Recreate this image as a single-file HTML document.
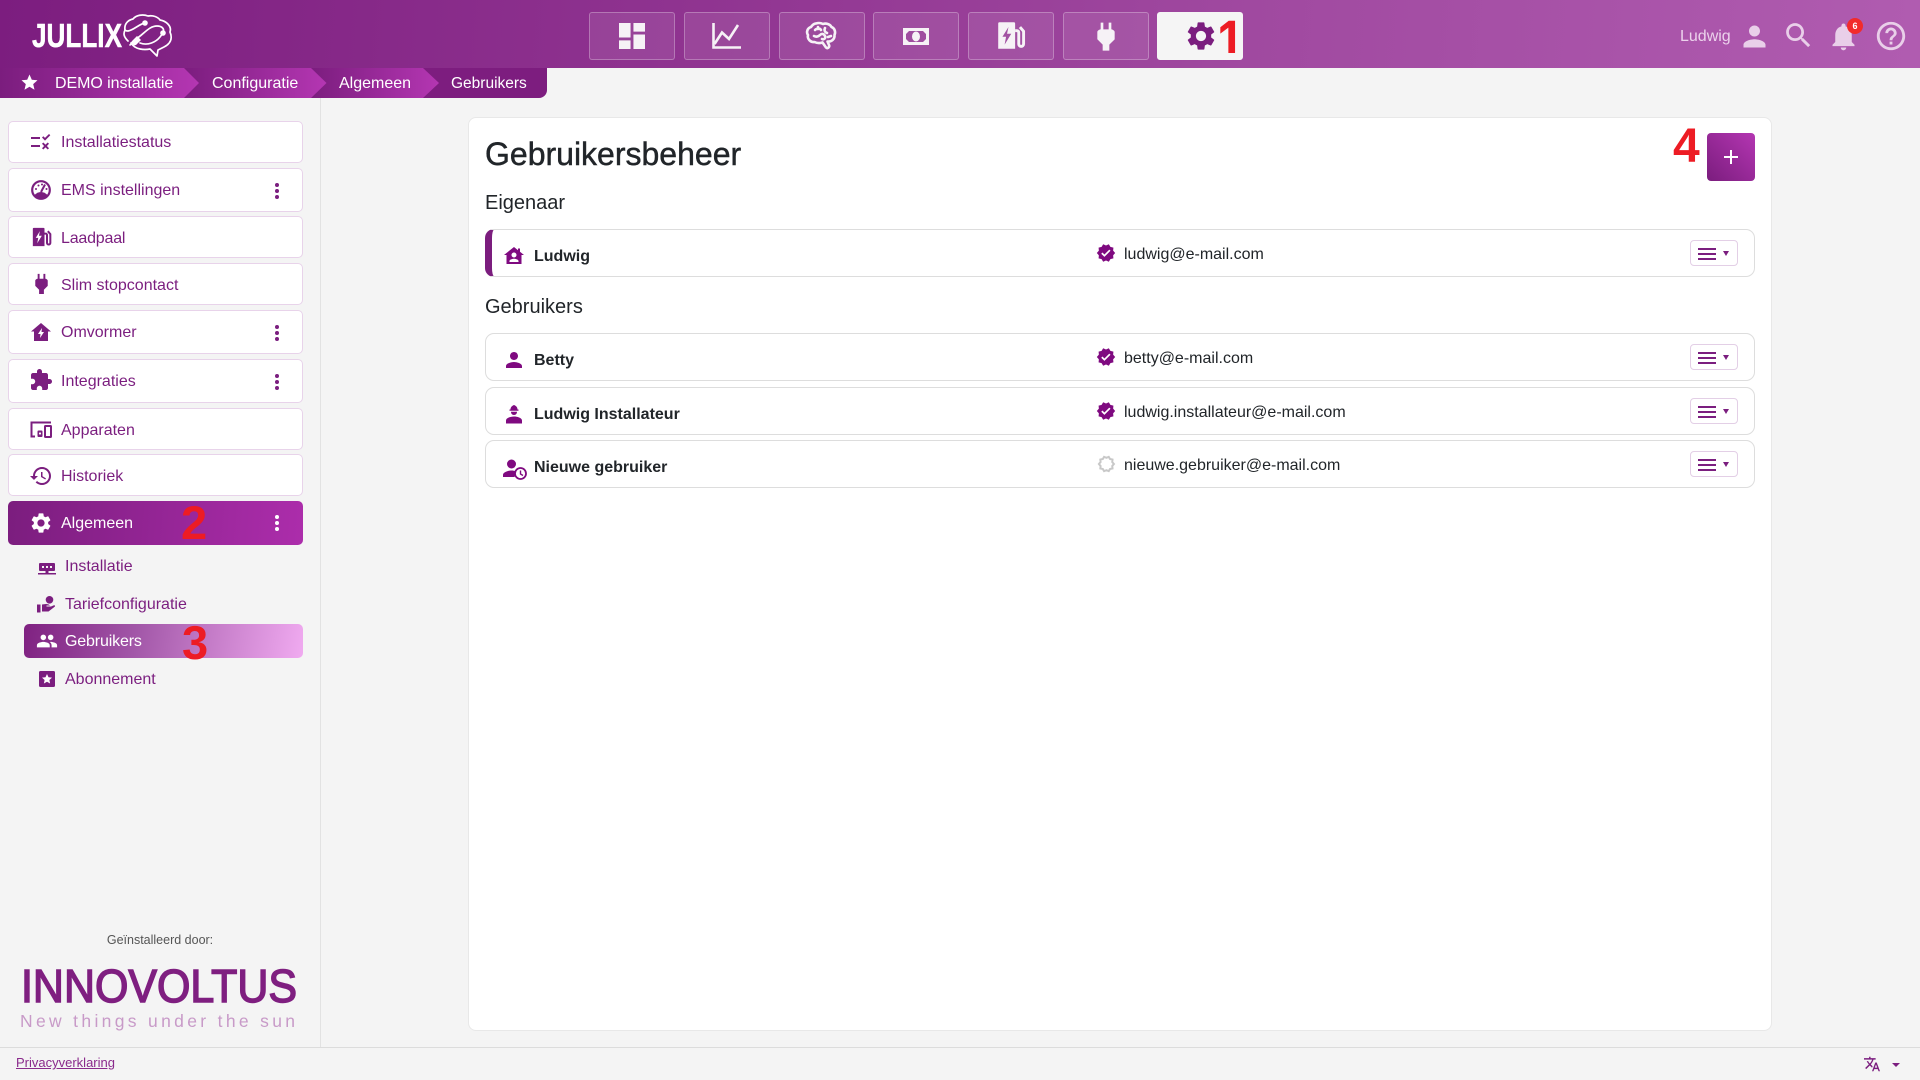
<!DOCTYPE html>
<html lang="nl">
<head>
<meta charset="utf-8">
<title>Gebruikersbeheer</title>
<style>
html,body{margin:0;padding:0;width:1920px;height:1080px;overflow:hidden;background:#f4f4f4;font-family:"Liberation Sans",sans-serif}
#root{position:relative;width:1920px;height:1080px;overflow:hidden}
.a,.t,.i,.b{position:absolute}
.t{white-space:nowrap;line-height:20px}
.i{display:block;overflow:visible}
.hdr{left:0;top:0;width:1920px;height:68px;background:linear-gradient(95deg,#7c1d7f 0%,#8f3390 35%,#a049a0 65%,#b05cb0 100%)}
.nb{position:absolute;top:12px;width:84px;height:46px;border:1px solid rgba(255,255,255,.28);background:rgba(255,255,255,.09);border-radius:3px}
.bc{color:#fff;font-size:16px;top:74px}
.side{left:320px;top:98px;width:1px;height:949px;background:#e2e2e2}
.m{position:absolute;left:8px;width:293px;background:#fff;border:1px solid #e8d3ea;border-radius:5px}
.mt{color:#7b1e7f;font-size:16px;left:61px}
.st{color:#7b1e7f;font-size:16px;left:65px}
.card{left:468px;top:117px;width:1302px;height:912px;background:#fff;border:1px solid #e8e8e8;border-radius:8px}
.row{position:absolute;left:485px;width:1268px;height:46px;background:#fff;border:1px solid #ddd;border-radius:9px}
.nm{font-weight:bold;font-size:16px;color:#212529;left:534px}
.em{font-size:16px;color:#212529;left:1124px}
.h{font-size:20px;color:#212529;left:485px}
.mb{position:absolute;left:1690px;width:46px;height:24px;border:1px solid #e3cfe6;border-radius:4px;background:#fff}
.mb i{position:absolute;left:7px;width:18px;height:2px;background:#7b1e7f}
.mb b{position:absolute;left:32px;top:10px;width:0;height:0;border-left:3.5px solid transparent;border-right:3.5px solid transparent;border-top:5px solid #7b1e7f}
.red{color:#ed1c24;font-weight:bold;line-height:1}
</style>
</head>
<body>
<div id="root">
<svg width="0" height="0" style="position:absolute">
<defs>
<symbol id="gear" viewBox="0 0 24 24"><path d="M19.14 12.94c.04-.3.06-.61.06-.94 0-.32-.02-.64-.07-.94l2.03-1.58c.18-.14.23-.41.12-.61l-1.92-3.32c-.12-.22-.37-.29-.59-.22l-2.39.96c-.5-.38-1.03-.7-1.62-.94l-.36-2.54c-.04-.24-.24-.41-.48-.41h-3.84c-.24 0-.43.17-.47.41l-.36 2.54c-.59.24-1.13.57-1.62.94l-2.39-.96c-.22-.08-.47 0-.59.22L2.74 8.87c-.12.21-.08.47.12.61l2.03 1.58c-.05.3-.09.63-.09.94s.02.64.07.94l-2.03 1.58c-.18.14-.23.41-.12.61l1.92 3.32c.12.22.37.29.59.22l2.39-.96c.5.38 1.03.7 1.62.94l.36 2.54c.05.24.24.41.48.41h3.84c.24 0 .44-.17.47-.41l.36-2.54c.59-.24 1.13-.56 1.62-.94l2.39.96c.22.08.47 0 .59-.22l1.92-3.32c.12-.22.07-.47-.12-.61l-2.01-1.58zM12 15.6c-1.98 0-3.6-1.62-3.6-3.6s1.62-3.6 3.6-3.6 3.6 1.62 3.6 3.6-1.62 3.6-3.6 3.6z"/></symbol>
<symbol id="ev" viewBox="0 0 24 24"><path fill-rule="evenodd" d="M2 1h12a1 1 0 0 1 1 1v21H1V2a1 1 0 0 1 1-1zM9.5 5 4.5 13h3l-1.2 6.5L11.8 10.5H8.3z"/><path d="M15 8h1.5a1.5 1.5 0 0 1 1.5 1.5v9.5a2 2 0 0 0 4 0V8.5L19 5" fill="none" stroke="currentColor" stroke-width="2.4"/></symbol>
<symbol id="plug" viewBox="0 0 24 24"><path d="M16.01 7 16 2h-2v5h-4V2H8v5h-.01C7 6.99 5.5 7.99 5.5 8.99v5.49L9.5 18.5V23h5v-4.5l4-4.01v-5.5c0-1-1.5-2-2.49-1.99z"/></symbol>
<symbol id="person" viewBox="0 0 24 24"><path d="M12 12c2.21 0 4-1.79 4-4s-1.79-4-4-4-4 1.79-4 4 1.79 4 4 4zm0 2c-2.67 0-8 1.34-8 4v2h16v-2c0-2.66-5.33-4-8-4z"/></symbol>
<symbol id="ver" viewBox="0 0 24 24"><path d="M23 12l-2.44-2.79.34-3.69-3.61-.82-1.89-3.2L12 2.96 8.6 1.5 6.71 4.69 3.1 5.5l.34 3.7L1 12l2.44 2.79-.34 3.7 3.61.82L8.6 22.5l3.4-1.47 3.4 1.46 1.89-3.19 3.61-.82-.34-3.69L23 12zm-12.91 4.72l-3.8-3.81 1.48-1.48 2.32 2.33 5.85-5.87 1.48 1.48-7.33 7.35z"/></symbol>
<symbol id="keb" viewBox="0 0 4 16"><circle cx="2" cy="2" r="2"/><circle cx="2" cy="8" r="2"/><circle cx="2" cy="14" r="2"/></symbol>
<linearGradient id="g1" gradientUnits="userSpaceOnUse" x1="0" y1="0" x2="199" y2="0"><stop offset="0" stop-color="#7b1d7e"/><stop offset="1" stop-color="#b436b2"/></linearGradient>
<linearGradient id="g2" gradientUnits="userSpaceOnUse" x1="184" y1="0" x2="326" y2="0"><stop offset="0" stop-color="#7b1d7e"/><stop offset="1" stop-color="#b436b2"/></linearGradient>
<linearGradient id="g3" gradientUnits="userSpaceOnUse" x1="311" y1="0" x2="439" y2="0"><stop offset="0" stop-color="#7b1d7e"/><stop offset="1" stop-color="#b436b2"/></linearGradient>
</defs>
</svg>

<!-- header -->
<div class="a hdr"></div>
<svg class="i" style="left:0;top:0" width="190" height="68" viewBox="0 0 190 68">
<text x="32" y="47" font-family="Liberation Sans" font-weight="bold" font-size="33" fill="#fff" stroke="#fff" stroke-width=".5" textLength="90" lengthAdjust="spacingAndGlyphs">JULLIX</text>
<g fill="none" stroke="#fff" stroke-width="1.7" stroke-linecap="round" stroke-linejoin="round">
<path d="M128 41C124 37 123 34 125 30C124 24 128 20 133 19C136 15 143 14 148 16C153 15 158 17 160 20C166 21 172 26 170 32C173 39 170 44 164 47L158 50L157 56L150 49C145 50 135 50 131 43"/>
<path d="M145 23C139 24 134 30 128 31C126 31 125 30 125 30"/>
<path d="M136 39C144 34 149 26 157 26C162 26 165 29 163 33"/>
<path d="M140 43C148 46 156 42 160 37L163 33"/>
</g>
<g fill="#fff"><circle cx="145" cy="23" r="2.8"/><circle cx="163" cy="33" r="2.8"/><path d="M132 41l5-5 4 4-5 5-2 .5-1.5-1.5-2.5 2-1-1 2-2.500z"/></g>
</svg>

<!-- breadcrumb -->
<svg class="i" style="left:0;top:68px" width="560" height="30" viewBox="0 68 560 30">
<path d="M0 68H547V90a8 8 0 0 1-8 8H0z" fill="#7d1d7f"/>
<path d="M311 68H423L439 83 423 98H311z" fill="url(#g3)"/>
<path d="M184 68H311L326.5 83 311 98H184z" fill="url(#g2)"/>
<path d="M0 68H184L199 83 184 98H0z" fill="url(#g1)"/>
<path d="M29.5 74.5l2.3 5.3 5.7.5-4.3 3.8 1.3 5.6-5-3-5 3 1.3-5.6-4.3-3.8 5.700-.5z" fill="#fff"/>
</svg>
<div class="t bc" style="left:55px;letter-spacing:-.06px">DEMO installatie</div>
<div class="t bc" style="left:212px">Configuratie</div>
<div class="t bc" style="left:339px">Algemeen</div>
<div class="t bc" style="left:451px;font-size:15.5px">Gebruikers</div>

<!-- nav buttons -->
<div class="nb" style="left:589px"></div>
<div class="nb" style="left:684px"></div>
<div class="nb" style="left:779px"></div>
<div class="nb" style="left:873px"></div>
<div class="nb" style="left:968px"></div>
<div class="nb" style="left:1063px"></div>
<div class="nb" style="left:1157px;background:#f5f5f5;border-color:#f5f5f5"></div>

<svg class="i" style="left:619px;top:23px" width="26" height="26" viewBox="3 3 18 18" preserveAspectRatio="none"><path fill="#f6f2f6" d="M3 13h8V3H3v10zm0 8h8v-6H3v6zm10 0h8V11h-8v10zm0-18v6h8V3h-8z"/></svg>
<svg class="i" style="left:712px;top:23px" width="29" height="26" viewBox="0 0 29 26" fill="none" stroke="#f6f2f6" stroke-width="2.6"><path d="M1.500 0V24.500H29"/><path d="M2.500 21 10 9.500 17 16 26 2"/></svg>
<svg class="i" style="left:806px;top:22px" width="31" height="28" viewBox="0 0 31 28" fill="none" stroke="#f6f2f6" stroke-width="2.6" stroke-linecap="round" stroke-linejoin="round"><path d="M10 1.500c3-1 5-.5 7 .5 3-1 7 0 8.500 3 3 1 4.500 5 3 8 .5 4-3 7-7 6.500l1.500 3.500c1 2-1.500 4-3 2.500l-3.500-5c-3 1-6 .5-8-.5-4 .5-7.500-3-6.500-7-2-3-.5-7 3-8 1-1.500 2.500-3 4.500-3.500z"/><path d="M9 8c2-2 5-2 6 0M19 6c-1 2-.5 4 2 5M8 14c2 1 4 1 6-1 2-2 4-1 5 1s-1 4-3 3M22 15l3-1M12 5v2"/></svg>
<svg class="i" style="left:903px;top:28px" width="26" height="17" viewBox="0 0 26 17"><path fill="#f6f2f6" fill-rule="evenodd" d="M0 0H26V17H0zM3 3V14H23V3z"/><ellipse cx="13" cy="8.500" rx="4" ry="5" fill="#f6f2f6"/><path fill="#f6f2f6" d="M3 3h3L3 6zM23 3h-3l3 3zM3 14h3L3 11zM23 14h-3l3-3z"/></svg>
<svg class="i" style="left:997px;top:21px;color:#f6f2f6" width="29" height="29" fill="#f6f2f6"><use href="#ev"/></svg>
<svg class="i" style="left:1090px;top:20px" width="32" height="32" fill="#f6f2f6"><use href="#plug"/></svg>
<svg class="i" style="left:1184px;top:19px" width="34" height="34" fill="#7b1e7f"><use href="#gear"/></svg>
<div class="a red" style="left:1217px;top:13px;font-size:58px;transform:scaleX(.84);transform-origin:left top;clip-path:inset(0 0 18px 0)">1</div>

<!-- right header -->
<div class="t" style="left:1680px;top:27px;font-size:16px;color:#ecd2ec">Ludwig</div>
<svg class="i" style="left:1738px;top:20px" width="33" height="33" fill="#e9cfe9"><use href="#person"/></svg>
<svg class="i" style="left:1782px;top:19px" width="33" height="33" viewBox="0 0 24 24"><path fill="#e9cfe9" d="M15.5 14h-.79l-.28-.27C15.41 12.59 16 11.11 16 9.5 16 5.91 13.09 3 9.5 3S3 5.91 3 9.5 5.91 16 9.5 16c1.61 0 3.09-.59 4.23-1.57l.27.28v.79l5 4.99L20.49 19l-4.99-5zm-6 0C7.01 14 5 11.99 5 9.5S7.01 5 9.5 5 14 7.01 14 9.5 11.99 14 9.5 14z"/></svg>
<svg class="i" style="left:1827px;top:20px" width="33" height="33" viewBox="0 0 24 24"><path fill="#e9cfe9" d="M12 22c1.1 0 2-.9 2-2h-4c0 1.1.89 2 2 2zm6-6v-5c0-3.07-1.64-5.64-4.5-6.32V4c0-.83-.67-1.5-1.5-1.5s-1.5.67-1.5 1.5v.68C7.63 5.36 6 7.92 6 11v5l-2 2v1h16v-1l-2-2z"/></svg>
<div class="a" style="left:1847px;top:18px;width:16px;height:16px;border-radius:50%;background:#f22b2b;color:#fff;font-size:9px;font-weight:bold;line-height:16px;text-align:center">6</div>
<svg class="i" style="left:1874px;top:19px" width="34" height="34" viewBox="0 0 24 24"><path fill="#e9cfe9" d="M11 18h2v-2h-2v2zm1-16C6.48 2 2 6.48 2 12s4.48 10 10 10 10-4.48 10-10S17.52 2 12 2zm0 18c-4.41 0-8-3.59-8-8s3.59-8 8-8 8 3.59 8 8-3.59 8-8 8zm0-14c-2.21 0-4 1.79-4 4h2c0-1.1.9-2 2-2s2 .9 2 2c0 2-3 1.75-3 5h2c0-2.25 3-2.5 3-5 0-2.21-1.79-4-4-4z"/></svg>

<!-- sidebar -->
<div class="a side"></div>
<div class="m" style="top:121px;height:40px"></div>
<div class="m" style="top:168px;height:42px"></div>
<div class="m" style="top:216px;height:40px"></div>
<div class="m" style="top:263px;height:40px"></div>
<div class="m" style="top:310px;height:42px"></div>
<div class="m" style="top:359px;height:42px"></div>
<div class="m" style="top:408px;height:40px"></div>
<div class="m" style="top:454px;height:40px"></div>
<div class="a" style="left:8px;top:501px;width:295px;height:44px;border-radius:5px;background:linear-gradient(95deg,#7b1d7e,#ac2dab)"></div>
<div class="a" style="left:24px;top:624px;width:279px;height:34px;border-radius:5px;background:linear-gradient(100deg,#7f2181 0%,#a257a8 40%,#f0aaf0 100%)"></div>

<div class="t mt" style="top:133px">Installatiestatus</div>
<div class="t mt" style="top:181px">EMS instellingen</div>
<div class="t mt" style="top:229px;letter-spacing:-.2px">Laadpaal</div>
<div class="t mt" style="top:276px">Slim stopcontact</div>
<div class="t mt" style="top:323px">Omvormer</div>
<div class="t mt" style="top:372px">Integraties</div>
<div class="t mt" style="top:421px">Apparaten</div>
<div class="t mt" style="top:467px">Historiek</div>
<div class="t mt" style="top:514px;color:#fff">Algemeen</div>
<div class="t st" style="top:557px">Installatie</div>
<div class="t st" style="top:595px">Tariefconfiguratie</div>
<div class="t st" style="top:632px;color:#fff;letter-spacing:-.15px">Gebruikers</div>
<div class="t st" style="top:670px">Abonnement</div>

<svg class="i" style="left:31px;top:134px" width="20" height="16" viewBox="0 0 20 16" fill="#7b1e7f"><rect x="0" y="3" width="9" height="2"/><rect x="0" y="11" width="9" height="2"/><path d="M11 3.500l1.300-1.300 1.700 1.700L18 0l1.300 1.300-5.300 5.300zM12.300 8.500l2.200 2.100 2.200-2.100L18 9.800l-2.100 2.200 2.100 2.200-1.300 1.300-2.200-2.100-2.200 2.100-1.300-1.300 2.100-2.200-2.100-2.200z"/></svg>
<svg class="i" style="left:31px;top:180px" width="20" height="20" viewBox="0 0 20 20"><circle cx="10" cy="10" r="8.800" fill="none" stroke="#7b1e7f" stroke-width="2.2"/><path d="M3.500 15c2-2 4-3 6.500-3s4.500 1 6.500 3l-2 3h-9z" fill="#7b1e7f"/><path d="M10 12l4-7.500" stroke="#7b1e7f" stroke-width="2"/><g fill="#7b1e7f"><circle cx="5" cy="9" r="1"/><circle cx="7.500" cy="5.500" r="1"/><circle cx="11" cy="4.500" r="1"/><circle cx="15.500" cy="9" r="1"/></g></svg>
<svg class="i" style="left:32px;top:227px;color:#7b1e7f" width="20" height="20" fill="#7b1e7f"><use href="#ev"/></svg>
<svg class="i" style="left:29.5px;top:272px" width="23" height="23" fill="#7b1e7f"><use href="#plug"/></svg>
<svg class="i" style="left:31px;top:323px" width="20" height="18" viewBox="0 0 20 18"><path fill="#7b1e7f" fill-rule="evenodd" d="M10 0 20 8.500H17V18H3V8.500H0zM11 5 7 11h2.500L9 15l4-6h-2.500z"/></svg>
<svg class="i" style="left:29px;top:368px" width="24" height="24" viewBox="0 0 24 24"><path fill="#7b1e7f" d="M20.5 11H19V7c0-1.1-.9-2-2-2h-4V3.500C13 2.120 11.880 1 10.500 1S8 2.120 8 3.500V5H4c-1.1 0-1.990.9-1.990 2v3.800H3.500c1.490 0 2.700 1.210 2.700 2.700s-1.210 2.700-2.700 2.700H2V20c0 1.100.9 2 2 2h3.800v-1.500c0-1.490 1.210-2.700 2.700-2.700 1.490 0 2.700 1.210 2.700 2.700V22H17c1.100 0 2-.9 2-2v-4h1.500c1.380 0 2.500-1.120 2.500-2.500S21.880 11 20.500 11z"/></svg>
<svg class="i" style="left:30px;top:421px" width="22" height="17" viewBox="0 0 22 17" fill="none" stroke="#7b1e7f" stroke-width="2"><path d="M5 15.500H1.500V1.500H21"/><rect x="15" y="5" width="6" height="11" rx=".5"/><rect x="7.500" y="9.500" width="5" height="6.500" rx="1" fill="#7b1e7f" stroke="none"/><circle cx="10" cy="12.500" r="1.100" fill="#fff" stroke="none"/></svg>
<svg class="i" style="left:29px;top:464px" width="24" height="24" viewBox="0 0 24 24"><path fill="#7b1e7f" d="M13 3c-4.970 0-9 4.030-9 9H1l3.890 3.890.07.14L9 12H6c0-3.870 3.130-7 7-7s7 3.130 7 7-3.130 7-7 7c-1.930 0-3.680-.79-4.940-2.060l-1.420 1.420C8.270 19.990 10.510 21 13 21c4.970 0 9-4.030 9-9s-4.030-9-9-9zm-1 5v5l4.280 2.540.72-1.210-3.500-2.080V8H12z"/></svg>
<svg class="i" style="left:29px;top:511px" width="24" height="24" fill="#fff"><use href="#gear"/></svg>

<svg class="i" style="left:38px;top:563px" width="18" height="13" viewBox="0 0 18 13" fill="#7b1e7f"><path fill-rule="evenodd" d="M2 0H16a1 1 0 0 1 1 1V7a1 1 0 0 1-1 1H2A1 1 0 0 1 1 7V1A1 1 0 0 1 2 0zM4 3V5H6V3zM8 3V5H10V3zM12 3V5H14V3z"/><rect x="7.500" y="8" width="3" height="2"/><rect x="0" y="10" width="18" height="1.500"/></svg>
<svg class="i" style="left:37px;top:596px" width="18" height="17" viewBox="0 0 18 17" fill="#7b1e7f"><circle cx="12.500" cy="3.800" r="3.800"/><rect x="0" y="8.500" width="3.500" height="8"/><path d="M5 8.500 9 8c2 0 3 .5 4 1.500H9.500v1H14l3.500-1.500.5 1.500-6.500 5H5z"/></svg>
<svg class="i" style="left:36px;top:630px" width="22" height="22" viewBox="0 0 24 24"><path fill="#fff" d="M16 11c1.660 0 2.990-1.340 2.990-3S17.660 5 16 5c-1.660 0-3 1.340-3 3s1.340 3 3 3zm-8 0c1.660 0 2.990-1.340 2.990-3S9.660 5 8 5C6.340 5 5 6.340 5 8s1.340 3 3 3zm0 2c-2.330 0-7 1.170-7 3.500V19h14v-2.500c0-2.330-4.670-3.500-7-3.500zm8 0c-.29 0-.62.02-.97.05 1.160.84 1.970 1.970 1.970 3.450V19h6v-2.500c0-2.330-4.670-3.500-7-3.500z"/></svg>
<svg class="i" style="left:39px;top:671px" width="16" height="16" viewBox="0 0 16 16"><rect width="16" height="16" rx="1.500" fill="#7b1e7f"/><path fill="#fff" d="M8 3l1.500 3.200 3.500.4-2.600 2.400.7 3.500L8 10.800 4.900 12.500l.7-3.500L3 6.600l3.500-.4z"/></svg>

<svg class="i" style="left:275px;top:183px" width="4" height="16" fill="#7b1e7f"><use href="#keb"/></svg>
<svg class="i" style="left:275px;top:325px" width="4" height="16" fill="#7b1e7f"><use href="#keb"/></svg>
<svg class="i" style="left:275px;top:374px" width="4" height="16" fill="#7b1e7f"><use href="#keb"/></svg>
<svg class="i" style="left:275px;top:515px" width="4" height="16" fill="#fff"><use href="#keb"/></svg>

<div class="a red" style="left:181px;top:499px;font-size:47px">2</div>
<div class="a red" style="left:182px;top:619px;font-size:47px">3</div>

<div class="t" style="left:60px;width:200px;text-align:center;top:930px;font-size:12.5px;color:#555">Geïnstalleerd door:</div>
<svg class="i" style="left:0;top:950px" width="320" height="90" viewBox="0 950 320 90">
<text x="21" y="1002" font-family="Liberation Sans" font-size="46" fill="#7f1f80" stroke="#7f1f80" stroke-width="1.5" textLength="276" lengthAdjust="spacingAndGlyphs">INNOVOLTUS</text>
<text x="20" y="1027" font-family="Liberation Sans" font-size="17.5" fill="#c89ac8" textLength="275" lengthAdjust="spacing">New things under the sun</text>
</svg>

<!-- footer -->
<div class="a" style="left:0;top:1047px;width:1920px;height:1px;background:#dcdcdc"></div>
<div class="t" style="left:16px;top:1053px;font-size:13px;color:#8a2a8c;text-decoration:underline">Privacyverklaring</div>
<svg class="i" style="left:1864px;top:1056px" width="16" height="16" viewBox="1 2 22 20"><path fill="#7b1e7f" d="M12.870 15.070l-2.540-2.510.03-.03c1.740-1.940 2.980-4.170 3.710-6.530H17V4h-7V2H8v2H1v1.990h11.170C11.500 7.920 10.440 9.750 9 11.350 8.070 10.320 7.300 9.190 6.690 8h-2c.73 1.630 1.730 3.170 2.980 4.560l-5.090 5.020L4 19l5-5 3.110 3.110.76-2.040zM18.500 10h-2L12 22h2l1.120-3h4.750L21 22h2l-4.500-12zm-2.620 7l1.620-4.330L19.120 17h-3.240z"/></svg>
<div class="a" style="left:1892px;top:1063px;width:0;height:0;border-left:4px solid transparent;border-right:4px solid transparent;border-top:4px solid #7b1e7f"></div>

<!-- card -->
<div class="a card"></div>
<div class="t" style="left:485px;top:134px;line-height:40px;font-size:32px;color:#212529;-webkit-text-stroke:.45px #212529">Gebruikersbeheer</div>
<div class="t h" style="top:193px">Eigenaar</div>
<div class="t h" style="top:297px">Gebruikers</div>
<div class="a red" style="left:1673px;top:123px;font-size:48px">4</div>
<div class="a" style="left:1707px;top:133px;width:48px;height:48px;border-radius:4px;background:linear-gradient(to top right,#7b1d7e,#b436b2)"></div>
<div class="a" style="left:1724px;top:156px;width:14px;height:2px;background:#fff"></div>
<div class="a" style="left:1730px;top:150px;width:2px;height:14px;background:#fff"></div>

<div class="row" style="top:229px;width:1262px;border-left:7px solid #7b1d7e"></div>
<div class="row" style="top:333px"></div>
<div class="row" style="top:387px"></div>
<div class="row" style="top:440px"></div>

<svg class="i" style="left:504px;top:247px" width="20" height="17" viewBox="0 0 20 17"><path fill="#7f0a80" fill-rule="evenodd" d="M10 0l4 3.200V1.500h2v3.300L20 8h-2.500v9h-15V8H0zM10 5.500a2.500 2.500 0 1 0 0 5 2.500 2.500 0 0 0 0-5zM5.500 15h9v-1c0-1.500-3-2.300-4.500-2.300S5.500 12.500 5.500 14z"/></svg>
<svg class="i" style="left:502px;top:348px" width="24" height="24" fill="#7f0a80"><use href="#person"/></svg>
<svg class="i" style="left:506px;top:404px" width="16" height="20" viewBox="0 0 16 20" fill="#7f0a80"><path d="M4.500 5.500c0-2 1-3.500 3.500-4.500 2.500 1 3.500 2.500 3.500 4.500h1v1.200h-9V5.500z"/><path d="M5 7.800h6c0 2-1.200 3.200-3 3.200S5 9.800 5 7.800zM8 12.500c-3 0-8 1.300-8 4v3h16v-3c0-2.700-5-4-8-4z"/></svg>
<svg class="i" style="left:503px;top:459px" width="24" height="21" viewBox="0 0 24 21"><circle cx="8.500" cy="5" r="4.500" fill="#7f0a80"/><path d="M0 18v-2c0-3 6-4.500 8.500-4.500 1.500 0 3 .3 4.500.8-1 1.500-1.700 3.500-1.300 5.700z" fill="#7f0a80"/><circle cx="17.500" cy="14.500" r="5.500" fill="#fff" stroke="#7f0a80" stroke-width="1.800"/><path d="M17.500 11.500v3.500l2.500 1.500" fill="none" stroke="#7f0a80" stroke-width="1.400"/></svg>

<div class="t nm" style="top:247px">Ludwig</div>
<div class="t nm" style="top:351px">Betty</div>
<div class="t nm" style="top:405px">Ludwig Installateur</div>
<div class="t nm" style="top:458px">Nieuwe gebruiker</div>

<svg class="i" style="left:1096px;top:243px" width="20" height="20" fill="#7f0a80"><use href="#ver"/></svg>
<svg class="i" style="left:1096px;top:347px" width="20" height="20" fill="#7f0a80"><use href="#ver"/></svg>
<svg class="i" style="left:1096px;top:401px" width="20" height="20" fill="#7f0a80"><use href="#ver"/></svg>
<svg class="i" style="left:1096px;top:454px" width="20" height="20" viewBox="0 0 24 24"><path fill="none" stroke="#c8c8c8" stroke-width="2.4" d="M21.500 12l-2-2.300.3-3-3-.7-1.500-2.600-2.800 1.200-2.800-1.200L8.200 6l-3 .7.300 3-2 2.300 2 2.300-.3 3 3 .7 1.500 2.600 2.800-1.200 2.800 1.200 1.500-2.600 3-.7-.3-3z"/></svg>

<div class="t em" style="top:245px">ludwig@e-mail.com</div>
<div class="t em" style="top:349px">betty@e-mail.com</div>
<div class="t em" style="top:403px">ludwig.installateur@e-mail.com</div>
<div class="t em" style="top:456px">nieuwe.gebruiker@e-mail.com</div>

<div class="mb" style="top:240px"><i style="top:7px"></i><i style="top:12px"></i><i style="top:17px"></i><b></b></div>
<div class="mb" style="top:344px"><i style="top:7px"></i><i style="top:12px"></i><i style="top:17px"></i><b></b></div>
<div class="mb" style="top:398px"><i style="top:7px"></i><i style="top:12px"></i><i style="top:17px"></i><b></b></div>
<div class="mb" style="top:451px"><i style="top:7px"></i><i style="top:12px"></i><i style="top:17px"></i><b></b></div>
</div>
</body>
</html>
